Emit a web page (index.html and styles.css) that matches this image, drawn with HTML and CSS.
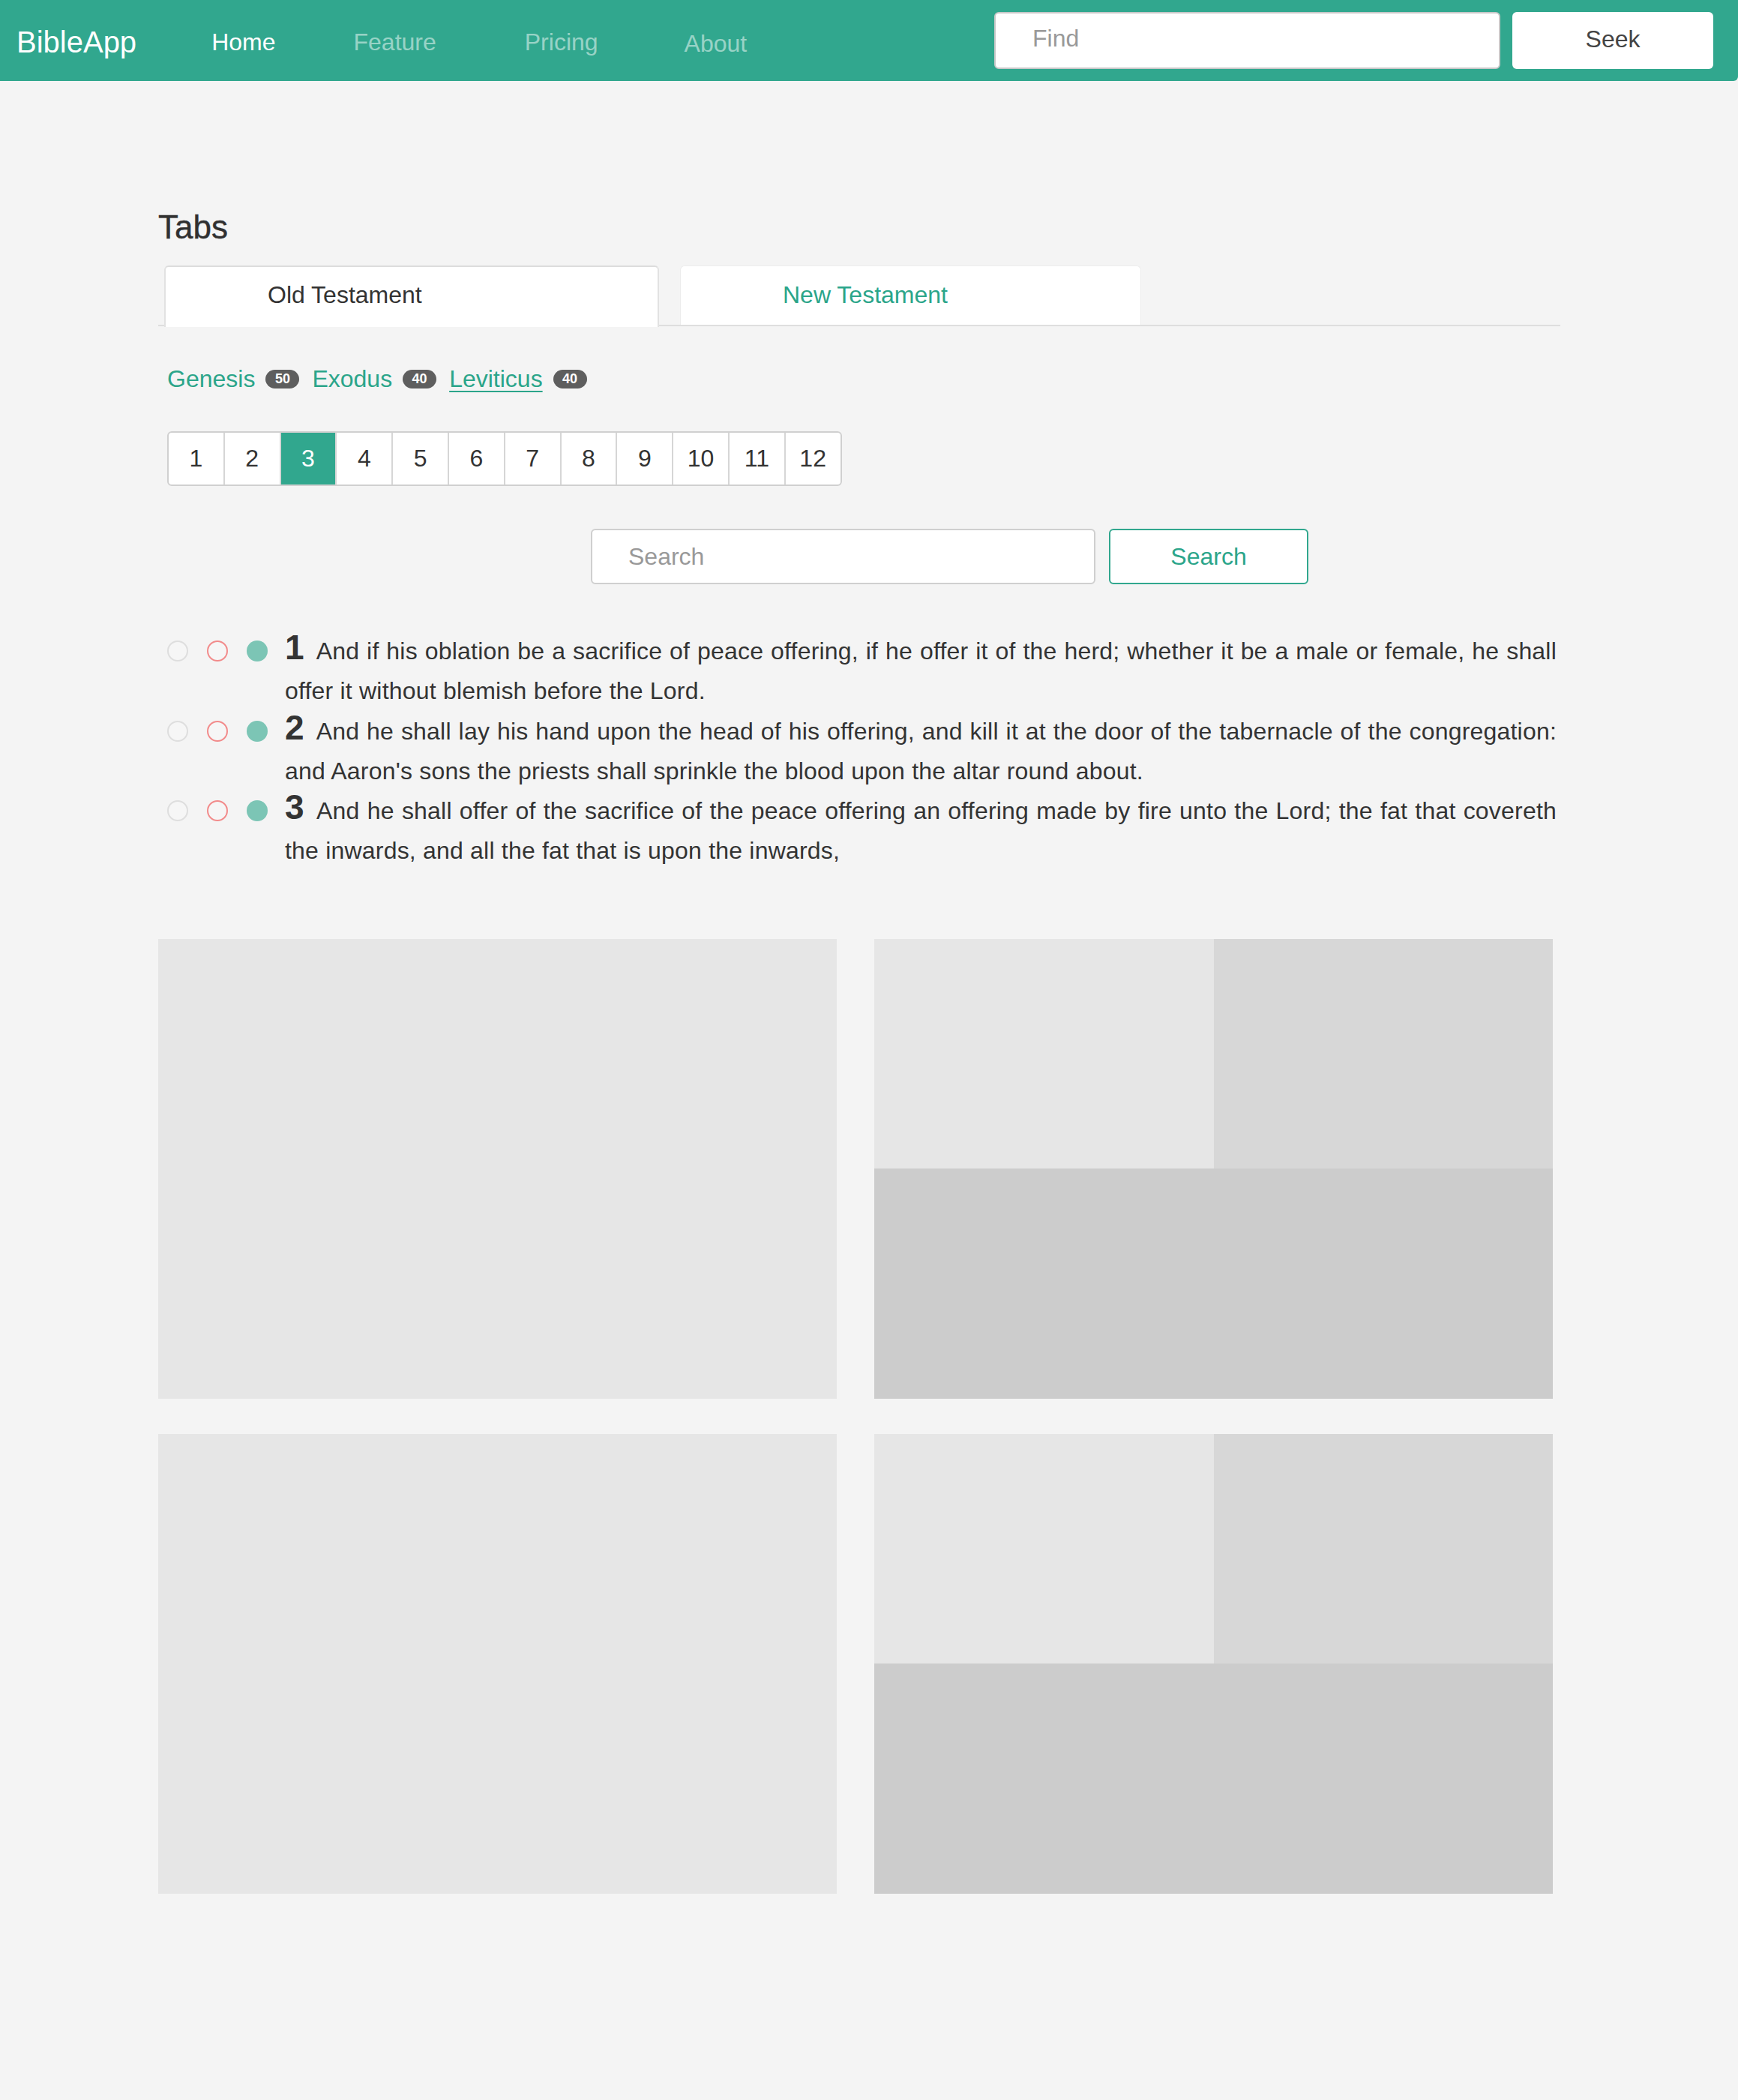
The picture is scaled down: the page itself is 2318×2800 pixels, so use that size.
FILE: index.html
```html
<!DOCTYPE html>
<html lang="en">
<head>
<meta charset="utf-8">
<title>BibleApp</title>
<link rel="stylesheet" href="styles.css">
</head>
<body>
<nav class="navbar">
  <a class="brand" href="#">BibleApp</a>
  <ul class="nav">
    <li class="nav-item item-home"><a class="nav-link active" href="#">Home</a></li>
    <li class="nav-item item-feature"><a class="nav-link" href="#">Feature</a></li>
    <li class="nav-item item-pricing"><a class="nav-link" href="#">Pricing</a></li>
    <li class="nav-item item-about"><a class="nav-link" href="#">About</a></li>
  </ul>
  <form class="nav-search">
    <input class="find" type="text" placeholder="Find">
    <button class="seek" type="button">Seek</button>
  </form>
</nav>

<main class="container">
  <h2 class="title">Tabs</h2>
  <div class="tabs">
    <a class="tab tab-old active" href="#">Old Testament</a>
    <a class="tab tab-new" href="#">New Testament</a>
  </div>

  <div class="books">
    <a class="book" href="#">Genesis</a><span class="badge">50</span>
    <a class="book" href="#">Exodus</a><span class="badge">40</span>
    <a class="book current" href="#">Leviticus</a><span class="badge">40</span>
  </div>

  <ul class="pagination">
    <li class="page">1</li>
    <li class="page">2</li>
    <li class="page active">3</li>
    <li class="page">4</li>
    <li class="page">5</li>
    <li class="page">6</li>
    <li class="page">7</li>
    <li class="page">8</li>
    <li class="page">9</li>
    <li class="page">10</li>
    <li class="page">11</li>
    <li class="page">12</li>
  </ul>

  <div class="search-row">
    <input class="search-input" type="text" placeholder="Search">
    <button class="search-btn" type="button">Search</button>
  </div>

  <div class="verses">
    <div class="verse">
      <div class="marks"><span class="mark mark-grey"></span><span class="mark mark-red"></span><span class="mark mark-teal"></span></div>
      <p class="text"><span class="num">1</span> And if his oblation be a sacrifice of peace offering, if he offer it of the herd; whether it be a male or female, he shall offer it without blemish before the Lord.</p>
    </div>
    <div class="verse">
      <div class="marks"><span class="mark mark-grey"></span><span class="mark mark-red"></span><span class="mark mark-teal"></span></div>
      <p class="text"><span class="num">2</span> And he shall lay his hand upon the head of his offering, and kill it at the door of the tabernacle of the congregation: and Aaron's sons the priests shall sprinkle the blood upon the altar round about.</p>
    </div>
    <div class="verse">
      <div class="marks"><span class="mark mark-grey"></span><span class="mark mark-red"></span><span class="mark mark-teal"></span></div>
      <p class="text"><span class="num">3</span> And he shall offer of the sacrifice of the peace offering an offering made by fire unto the Lord; the fat that covereth the inwards, and all the fat that is upon the inwards,</p>
    </div>
  </div>

  <div class="grid">
    <div class="cell cell-plain"></div>
    <div class="cell cell-split">
      <div class="part part-a"></div>
      <div class="part part-b"></div>
      <div class="part part-c"></div>
    </div>
    <div class="cell cell-plain"></div>
    <div class="cell cell-split">
      <div class="part part-a"></div>
      <div class="part part-b"></div>
      <div class="part part-c"></div>
    </div>
  </div>
</main>
</body>
</html>
```

FILE: styles.css
```css
* { box-sizing: border-box; }

html, body {
  margin: 0;
  padding: 0;
}

body {
  background: #f4f4f4;
  font-family: "Liberation Sans", Arial, Helvetica, sans-serif;
  font-size: 32px;
  color: #333;
  min-height: 2800px;
}

a { text-decoration: none; }

/* ---------- navbar ---------- */
.navbar {
  height: 108px;
  background: #31a78e;
  display: flex;
  align-items: center;
  border-bottom-right-radius: 6px;
}

.brand {
  margin-left: 22px;
  margin-top: 4px;
  font-size: 40px;
  color: #fff;
  line-height: 1;
}

.nav {
  list-style: none;
  margin: 4px 0 0;
  padding: 0;
  display: flex;
  align-items: center;
}

.nav-link {
  font-size: 32px;
  color: rgba(255, 255, 255, 0.5);
  line-height: 1;
}

.nav-link.active { color: #fff; }

.item-home { margin-left: 100px; }
.item-feature { margin-left: 104px; }
.item-pricing { margin-left: 118px; }
.item-about { margin-left: 115px; padding-top: 4px; }

.nav-search {
  margin: 0 33px 0 auto;
  display: flex;
  align-items: center;
  gap: 16px;
}

.find {
  width: 675px;
  height: 76px;
  border: 2px solid #c8c8c8;
  border-radius: 6px;
  background: #fff;
  padding: 0 0 6px 49px;
  font-family: inherit;
  font-size: 32px;
  color: #333;
}

.find::placeholder { color: #999; }

.seek {
  width: 268px;
  height: 76px;
  border: 0;
  border-radius: 6px;
  background: #fff;
  padding: 0 0 4px;
  font-family: inherit;
  font-size: 32px;
  color: #444;
}

/* ---------- container ---------- */
.container {
  margin-left: 211px;
  width: 1870px;
}

.title {
  margin: 170px 0 0;
  font-size: 44px;
  line-height: 50px;
  font-weight: normal;
  color: #303030;
  -webkit-text-stroke: 0.4px #303030;
}

/* ---------- tabs ---------- */
.tabs {
  margin-top: 26px;
  padding-left: 8px;
  height: 81px;
  display: flex;
  align-items: flex-start;
  gap: 28px;
  border-bottom: 2px solid #dedede;
}

.tab {
  display: block;
  height: 79px;
  padding-left: 136px;
  font-size: 32px;
  line-height: 74px;
  background: #fff;
  border-top-left-radius: 6px;
  border-top-right-radius: 6px;
}

.tab-old {
  width: 660px;
  height: 82px;
  color: #333;
  border: 2px solid #e2e2e2;
  border-top-color: #dcdcdc;
  border-bottom: 0;
  position: relative;
  z-index: 1;
}

.tab-new {
  width: 615px;
  color: #2ba58a;
  border: 1px solid #ececec;
  border-bottom: 0;
  line-height: 76px;
}

/* ---------- books ---------- */
.books {
  margin-top: 50px;
  padding-left: 12px;
  height: 40px;
  line-height: 40px;
  display: flex;
  align-items: center;
}

.book {
  color: #2ba58a;
  font-size: 32px;
}

.book.current {
  text-decoration: underline;
  text-decoration-thickness: 2px;
  text-underline-offset: 5px;
}

.badge {
  display: inline-block;
  margin: 0 17px 0 14px;
  height: 25px;
  min-width: 45px;
  padding: 0 9px;
  border-radius: 13px;
  background: #5e5e5e;
  color: #fff;
  font-size: 18px;
  font-weight: bold;
  line-height: 25px;
  text-align: center;
}

/* ---------- pagination ---------- */
.pagination {
  list-style: none;
  margin: 50px 0 0 12px;
  padding: 0;
  display: inline-flex;
  border: 2px solid #d0d0d0;
  border-radius: 6px;
  overflow: hidden;
  background: #fff;
}

.page {
  width: 74.8px;
  height: 69px;
  line-height: 69px;
  text-align: center;
  font-size: 32px;
  color: #333;
  border-left: 2px solid #d6d6d6;
}

.page:first-child {
  border-left: 0;
  width: 72.8px;
}

.page.active {
  background: #31a78e;
  color: #fff;
}

/* ---------- search ---------- */
.search-row {
  margin: 57px 0 0 577px;
  display: flex;
  gap: 18px;
}

.search-input {
  width: 673px;
  height: 74px;
  border: 2px solid #cfcfcf;
  border-radius: 6px;
  background: #fff;
  padding-left: 48px;
  font-family: inherit;
  font-size: 32px;
  color: #333;
}

.search-input::placeholder { color: #999; }

.search-btn {
  width: 266px;
  height: 74px;
  border: 2px solid #31a78e;
  border-radius: 6px;
  background: #fff;
  color: #2ba58a;
  font-family: inherit;
  font-size: 32px;
}

/* ---------- verses ---------- */
.verses {
  margin-top: 63px;
}

.verse {
  display: flex;
  align-items: flex-start;
}

.marks {
  flex: 0 0 169px;
  padding: 12px 0 0 12px;
  display: flex;
  gap: 25px;
}

.mark {
  width: 28px;
  height: 28px;
  border-radius: 50%;
  display: block;
}

.mark-grey {
  border: 2px solid #dedede;
  background: #f6f6f6;
}

.mark-red {
  border: 2px solid #f28b8b;
  background: #f6f6f6;
}

.mark-teal {
  background: #7cc5b5;
}

.text {
  flex: 1;
  margin: 0 5px 0 0;
  font-size: 32px;
  line-height: 53.3px;
  letter-spacing: 0.2px;
  color: #333;
  text-align: justify;
}

.num {
  font-size: 46px;
  font-weight: bold;
  line-height: 0;
  letter-spacing: 0;
  margin-right: 8px;
  color: #333;
}

/* ---------- grid ---------- */
.grid {
  margin-top: 90px;
  width: 1860px;
  display: grid;
  grid-template-columns: 905px 905px;
  grid-auto-rows: 613px;
  column-gap: 50px;
  row-gap: 47px;
}

.cell-plain {
  background: #e6e6e6;
}

.cell-split {
  display: grid;
  grid-template-columns: 1fr 1fr;
  grid-template-rows: 306px 1fr;
}

.part-a { background: #e6e6e6; }
.part-b { background: #d7d7d7; }
.part-c { background: #cccccc; grid-column: 1 / 3; }
```
